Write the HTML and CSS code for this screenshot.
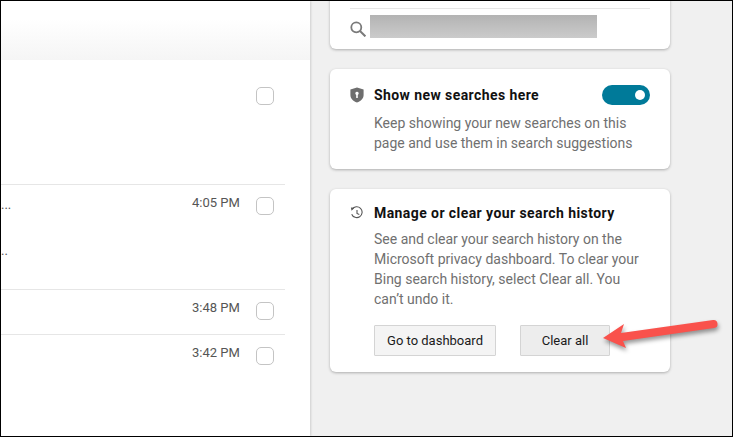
FILE: index.html
```html
<!DOCTYPE html>
<html lang="en">
<head>
<meta charset="utf-8">
<title>Search history</title>
<link rel="stylesheet" href="styles.css">
</head>
<body>
<div class="frame">
  <main class="list">
    <div class="list-head"></div>
    <div class="row row-a">
      <div class="row-text"></div>
      <span class="check"></span>
    </div>
    <div class="row row-b">
      <div class="row-text"><span class="dots">...</span><span class="dots dots-2">..</span></div>
      <span class="time">4:05 PM</span>
      <span class="check"></span>
    </div>
    <div class="row row-c">
      <div class="row-text"></div>
      <span class="time">3:48 PM</span>
      <span class="check"></span>
    </div>
    <div class="row row-d">
      <div class="row-text"></div>
      <span class="time">3:42 PM</span>
      <span class="check"></span>
    </div>
  </main>
  <aside class="side">
    <section class="card card-search">
      <div class="search-row">
        <svg class="search-icon" viewBox="0 0 16 16" width="16" height="16" aria-hidden="true"><circle cx="6.300" cy="6.300" r="5" fill="none" stroke="#7a7a7a" stroke-width="1.800"/><path d="M10 10 15.400 15.400" stroke="#7a7a7a" stroke-width="2" fill="none"/></svg>
        <div class="redacted"></div>
      </div>
    </section>
    <section class="card card-toggle">
      <div class="card-head">
        <svg class="head-icon" viewBox="0 0 14 16" width="14" height="16" aria-hidden="true"><path fill="#6e6e6e" fill-rule="evenodd" d="M7 .4 13.600 2.500V8c0 3.600-2.700 6.200-6.600 7.600C3.100 14.200.4 11.600.4 8V2.500ZM7 4.800a1.700 1.700 0 0 0-.8 3.200V11h1.600V8A1.700 1.700 0 0 0 7 4.800Z"/></svg>
        <h2 class="card-title">Show new searches here</h2>
        <span class="toggle"><span class="knob"></span></span>
      </div>
      <p class="card-body">Keep showing your new searches on this page and use them in search suggestions</p>
    </section>
    <section class="card card-manage">
      <div class="card-head">
        <svg class="head-icon" viewBox="0 0 14 14" width="14" height="14" aria-hidden="true"><path fill="none" stroke="#555" stroke-width="1.100" d="M2.200 3.200A5.400 5.400 0 1 1 1.700 8.200"/><path fill="#555" d="M.9 1.400 4.500 1.700 1.500 4.700Z"/><path fill="none" stroke="#555" stroke-width="1.100" d="M7 4v3.400l2.300 1"/></svg>
        <h2 class="card-title">Manage or clear your search history</h2>
      </div>
      <p class="card-body">See and clear your search history on the Microsoft privacy dashboard. To clear your Bing search history, select Clear all. You can’t undo it.</p>
      <div class="actions">
        <button class="btn btn-dash">Go to dashboard</button>
        <button class="btn btn-clear">Clear all</button>
      </div>
    </section>
  </aside>
  <svg class="arrow" viewBox="0 0 120 40" width="120" height="40" aria-hidden="true">
    <path class="arrow-shape" d="M0 21 21 7 18 16 110 3A4 4 0 0 1 111 11L20 24 23 31Z"/>
  </svg>
</div>
</body>
</html>
```
FILE: styles.css
```css
* { box-sizing: border-box; }
html, body { margin: 0; padding: 0; }
body {
  width: 733px;
  height: 437px;
  overflow: hidden;
  font-family: Roboto, "Liberation Sans", sans-serif;
}
.frame {
  position: relative;
  display: flex;
  width: 733px;
  height: 437px;
  background: #f0f0f0;
  border: 1px solid #000;
  overflow: hidden;
}
.list {
  width: 309px;
  flex: none;
  background: #fff;
  box-shadow: 1px 0 2px rgba(0,0,0,.14);
  display: flex;
  flex-direction: column;
}
.list-head {
  height: 59px;
  flex: none;
  background: linear-gradient(#fff 0, #fff 30%, #f5f5f5 100%);
}
.row {
  display: flex;
  align-items: flex-start;
  margin-right: 25px;
  border-top: 1px solid #e6e6e6;
}
.row-a { height: 124px; padding-top: 27px; border-top: 0; margin-right: 25px; }
.row-b { height: 105px; padding-top: 10px; }
.row-c { height: 45px; padding-top: 10px; }
.row-d { height: 60px; padding-top: 10px; }
.row-text { flex: 1; position: relative; }
.dots {
  display: block;
  font-size: 13px;
  line-height: 20px;
  color: #555;
  height: 20px;
}
.dots-2 { margin-top: 26px; }
.time {
  font-size: 13px;
  line-height: 16px;
  color: #555;
  width: 48px;
  margin-right: 16px;
  white-space: nowrap;
}
.check {
  width: 18px;
  height: 18px;
  flex: none;
  margin-right: 11px;
  margin-top: 2px;
  border: 1px solid #c4c4c4;
  border-radius: 5px;
  background: #fff;
}
.row-a .check { margin-top: 0; }
.side {
  margin-left: 20px;
  width: 340px;
  flex: none;
  margin-top: -61px;
  display: flex;
  flex-direction: column;
  gap: 20px;
}
.card {
  background: #fff;
  border-radius: 6px;
  box-shadow: 0 1px 3px rgba(0,0,0,.28);
  padding: 0 20px;
  flex: none;
}
.card-search { height: 109px; padding-top: 68px; }
.search-row {
  display: flex;
  align-items: flex-start;
  gap: 4px;
  border-top: 1px solid #e6e6e6;
  padding-top: 6px;
}
.search-icon { margin-top: 6px; flex: none; }
.redacted {
  width: 227px;
  height: 23px;
  background: linear-gradient(#b3b3b3, #cbcbcb);
}
.card-toggle { height: 100px; padding-top: 16px; }
.card-manage { height: 183px; padding-top: 14px; }
.card-head {
  display: flex;
  align-items: center;
  height: 20px;
}
.head-icon { flex: none; width: 14px; margin-right: 10px; }
.card-title {
  margin: 0;
  flex: 1;
  font-size: 14px;
  font-weight: 700;
  letter-spacing: .42px;
  line-height: 20px;
  color: #111;
  white-space: nowrap;
}
.toggle {
  width: 48px;
  height: 20px;
  border-radius: 10px;
  background: #007a99;
  display: flex;
  justify-content: flex-end;
  align-items: center;
  padding-right: 5px;
}
.knob {
  width: 10px;
  height: 10px;
  border-radius: 50%;
  background: #fff;
}
.card-body {
  margin: 8px 0 0 24px;
  font-size: 14px;
  line-height: 20px;
  color: #707070;
  width: 270px;
}
.card-manage .card-body { margin-top: 6px; }
.actions {
  display: flex;
  gap: 24px;
  margin: 16px 0 0 24px;
}
.btn {
  height: 31px;
  padding: 0;
  font: 400 13px/1 Roboto, "Liberation Sans", sans-serif;
  color: #1a1a1a;
  background: #f4f4f4;
  border: 1px solid #d4d4d4;
  border-radius: 1px;
}
.btn-dash { width: 122px; }
.btn-clear { width: 90px; background: #ededed; }
.arrow {
  position: absolute;
  left: 602px;
  top: 316px;
  overflow: visible;
}
.arrow-shape {
  fill: #f9524c;
  filter: drop-shadow(1px 3px 2px rgba(0,0,0,.4));
}
```
